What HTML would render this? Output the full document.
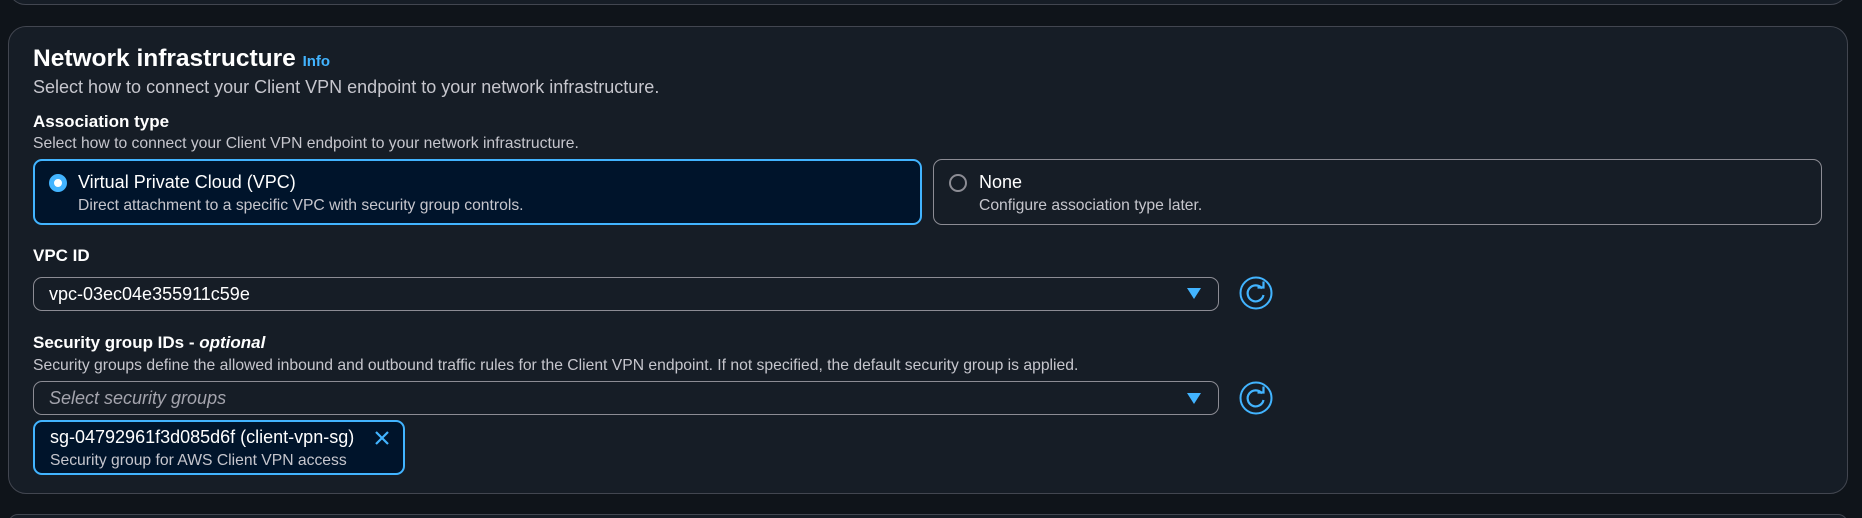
<!DOCTYPE html>
<html style="width:1862px;height:518px;overflow:hidden"><head><meta charset="utf-8"><style>
*{box-sizing:border-box;margin:0;padding:0}
body{width:1862px;height:518px;background:#0f141a;font-family:"Liberation Sans",sans-serif;color:#dedee3;position:relative;overflow:hidden}
.card{position:absolute;background:#161d26;border:1px solid #424650;border-radius:18px}
.abs{position:absolute;white-space:nowrap}
.h{font-size:24.5px;font-weight:bold;color:#fff}
.d{font-size:18px;color:#c6c6cd}
.s{font-size:15.7px;color:#c6c6cd}
.l{font-size:17px;font-weight:bold;color:#fff}
.tile{position:absolute;border-radius:9px}
.sel{position:absolute;border:1px solid #8c8c94;border-radius:9px}
.tri{position:absolute;width:0;height:0;border-left:7px solid transparent;border-right:7px solid transparent;border-top:11px solid #42b4ff}
</style></head><body>
<div class="card" style="left:8px;top:-30px;width:1840px;height:35px"></div>
<div class="card" style="left:8px;top:26px;width:1840px;height:468px"></div>
<div class="card" style="left:8px;top:514px;width:1840px;height:20px"></div>

<div class="abs h" style="left:33px;top:45px">Network infrastructure <span style="font-size:15px;color:#42b4ff">Info</span></div>
<div class="abs d" style="left:33px;top:77px">Select how to connect your Client VPN endpoint to your network infrastructure.</div>
<div class="abs l" style="left:33px;top:112px">Association type</div>
<div class="abs s" style="left:33px;top:135px">Select how to connect your Client VPN endpoint to your network infrastructure.</div>

<div class="tile" style="left:33px;top:159px;width:889px;height:66px;border:2px solid #42b4ff;background:#00142b"></div>
<div class="abs" style="left:49px;top:174px;width:18px;height:18px;border-radius:50%;border:5px solid #42b4ff;background:#fff"></div>
<div class="abs" style="left:78px;top:172px;font-size:18px;color:#fff">Virtual Private Cloud (VPC)</div>
<div class="abs s" style="left:78px;top:197px">Direct attachment to a specific VPC with security group controls.</div>

<div class="tile" style="left:933px;top:159px;width:889px;height:66px;border:1px solid #8c8c94"></div>
<div class="abs" style="left:949px;top:174px;width:18px;height:18px;border-radius:50%;border:2px solid #8c8c94"></div>
<div class="abs" style="left:979px;top:172px;font-size:18px;color:#fff">None</div>
<div class="abs s" style="left:979px;top:197px">Configure association type later.</div>

<div class="abs l" style="left:33px;top:246px">VPC ID</div>
<div class="sel" style="left:33px;top:277px;width:1186px;height:34px"></div>
<div class="abs" style="left:49px;top:284px;font-size:18px;color:#fff">vpc-03ec04e355911c59e</div>
<div class="tri" style="left:1187px;top:288px"></div>
<svg class="abs" style="left:1239px;top:276px" width="34" height="34" viewBox="0 0 34 34"><circle cx="17" cy="17" r="15.5" fill="none" stroke="#42b4ff" stroke-width="2"/><path d="M23 12.5A8 8 0 1 0 24.5 19" fill="none" stroke="#42b4ff" stroke-width="2.2"/><path d="M18.5 11.5h6v-6" fill="none" stroke="#42b4ff" stroke-width="2.2"/></svg>

<div class="abs l" style="left:33px;top:333px">Security group IDs - <i>optional</i></div>
<div class="abs s" style="left:33px;top:357px">Security groups define the allowed inbound and outbound traffic rules for the Client VPN endpoint. If not specified, the default security group is applied.</div>
<div class="sel" style="left:33px;top:381px;width:1186px;height:34px"></div>
<div class="abs" style="left:49px;top:388px;font-size:18px;color:#a4a4ad;font-style:italic">Select security groups</div>
<div class="tri" style="left:1187px;top:393px"></div>
<svg class="abs" style="left:1239px;top:381px" width="34" height="34" viewBox="0 0 34 34"><circle cx="17" cy="17" r="15.5" fill="none" stroke="#42b4ff" stroke-width="2"/><path d="M23 12.5A8 8 0 1 0 24.5 19" fill="none" stroke="#42b4ff" stroke-width="2.2"/><path d="M18.5 11.5h6v-6" fill="none" stroke="#42b4ff" stroke-width="2.2"/></svg>

<div class="tile" style="left:33px;top:420px;width:372px;height:55px;border:2px solid #42b4ff;background:#00142b"></div>
<div class="abs" style="left:50px;top:427px;font-size:18px;color:#fff">sg-04792961f3d085d6f (client-vpn-sg)</div>
<div class="abs s" style="left:50px;top:452px">Security group for AWS Client VPN access</div>
<svg class="abs" style="left:374px;top:430px" width="16" height="16" viewBox="0 0 16 16"><path d="M2 2L14 14M14 2L2 14" stroke="#42b4ff" stroke-width="2.2"/></svg>
</body></html>
